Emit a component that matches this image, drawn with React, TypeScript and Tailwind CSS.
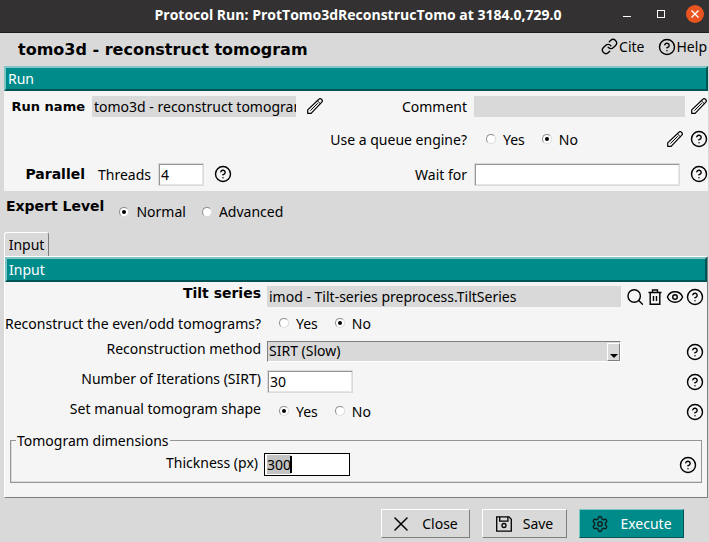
import { useEffect, useRef, type ReactNode } from 'react'
import { CircleHelp, Eye, Link, Settings } from 'lucide-react'

const greyField = 'h-[21px] min-w-0 bg-[#d9d9d9] pl-[2px] outline-none'
const entry =
  'h-[23px] min-w-0 border border-[#dadada] bg-white px-[2px] shadow-[inset_1px_1px_0_#969696,inset_-1px_-1px_0_#e6e6e6] outline-none'

function PencilIcon() {
  return (
    <svg className="size-4" viewBox="0 0 16 16" fill="none" stroke="currentColor" strokeWidth="1.2" strokeLinejoin="round">
      <path d="M.7 15.3v-3.4L11.9 1.2c.7-.7 1.8-.7 2.5 0l.4.4c.7.7.7 1.8 0 2.5L4.1 15.3z" />
      <path d="M10.4 2.8l2.9 2.9M3.4 12.6l7.4-7.4" strokeWidth="1" />
    </svg>
  )
}

function SearchIcon() {
  return (
    <svg className="size-4" viewBox="0 0 16 16" fill="none" stroke="currentColor" strokeWidth="1.4" strokeLinecap="round">
      <circle cx="7.2" cy="7" r="6.2" />
      <path d="M11.7 11.5l3.8 3.8" />
    </svg>
  )
}

function TrashIcon() {
  return (
    <svg className="size-4" viewBox="0 0 16 16" fill="none" stroke="currentColor" strokeWidth="1.4">
      <path d="M1.5 3.5h13M5.5 3.3V1h5v2.3M3.2 3.5v11.7h9.6V3.5M6.5 7v5M9.5 7v5" />
    </svg>
  )
}

function SaveIcon() {
  return (
    <svg className="size-4" viewBox="0 0 16 16" fill="none" stroke="currentColor" strokeWidth="1.3">
      <path d="M.7.8h12.2l2.4 2.4v12H.7z" />
      <path d="M3.7.8v4.4h8.2V.8" />
      <circle cx="8" cy="9.5" r="2" />
    </svg>
  )
}

function CrossIcon() {
  return (
    <svg className="size-4" viewBox="0 0 16 16" fill="none" stroke="currentColor" strokeWidth="1.5" strokeLinecap="round">
      <path d="M2 2l12 12M14 2L2 14" />
    </svg>
  )
}

function IconButton({ label, children }: { label: string; children: ReactNode }) {
  return (
    <button type="button" aria-label={label} className="flex size-4 shrink-0 items-center justify-center">
      {children}
    </button>
  )
}

function Help() {
  return (
    <IconButton label="Help">
      <CircleHelp size={18} strokeWidth={1.9} className="shrink-0" />
    </IconButton>
  )
}

function Radio({ name, label, checked }: { name: string; label: string; checked?: boolean }) {
  return (
    <label className="flex items-center gap-[7px]">
      <input
        type="radio"
        name={name}
        defaultChecked={checked}
        className="flex size-[10px] appearance-none items-center justify-center rounded-full border border-t-[#8c8c8c] border-r-[#dcdcdc] border-b-[#dcdcdc] border-l-[#8c8c8c] bg-white checked:before:size-1 checked:before:rounded-full checked:before:bg-black"
      />
      {label}
    </label>
  )
}

function SectionBar({ children }: { children: ReactNode }) {
  return (
    <h2 className="flex h-[25px] items-center border-2 border-t-[#7fc5c5] border-r-[#005454] border-b-[#005454] border-l-[#7fc5c5] bg-[#008b8b] px-[2px] pb-px text-white">
      {children}
    </h2>
  )
}

function Row({ label, htmlFor, height, bold, raised, children, icons }: {
  label: string
  htmlFor?: string
  height: string
  bold?: boolean
  raised?: boolean
  children: ReactNode
  icons?: ReactNode
}) {
  return (
    <div className={`flex items-center gap-[6px] ${height}`}>
      <label
        htmlFor={htmlFor}
        className={`w-[256px] shrink-0 text-right whitespace-nowrap ${raised ? 'pb-[6px]' : ''} ${bold ? "font-['DejaVu_Sans',sans-serif] font-bold" : ''}`}
      >
        {label}
      </label>
      <div className="flex min-w-0 flex-1">{children}</div>
      <div className="flex w-[80px] shrink-0 justify-end gap-1 pt-[2px] pr-1">{icons}</div>
    </div>
  )
}

export default function App() {
  const thickness = useRef<HTMLInputElement>(null)
  useEffect(() => {
    thickness.current?.focus()
    thickness.current?.select()
  }, [])

  return (
    <div className="min-h-screen bg-[#d9d9d9] font-['Noto_Sans',sans-serif] text-[14px] leading-[19px] text-black">
      <header className="flex h-[33px] items-center border-b border-[#1c1c1c] bg-[#333131] pr-[5px] pb-1 text-white">
        <h1 className="min-w-0 flex-1 pl-[93px] text-center font-['Open_Sans',sans-serif] font-bold whitespace-nowrap">
          Protocol Run: ProtTomo3dReconstrucTomo at 3184.0,729.0
        </h1>
        <div className="flex items-center gap-[21px]">
          <div className="flex items-center gap-[26px]">
            <button type="button" aria-label="Minimize" className="mt-1 h-px w-2 bg-white" />
            <button type="button" aria-label="Maximize" className="size-2 border border-white" />
          </div>
          <button type="button" aria-label="Close window" className="flex size-[18px] items-center justify-center rounded-full bg-[#e95420]">
            <svg className="size-2" viewBox="0 0 8 8" stroke="currentColor" strokeWidth="1.4">
              <path d="M.5.5l7 7M7.5.5l-7 7" />
            </svg>
          </button>
        </div>
      </header>

      <div className="flex h-[33px] items-center justify-between pr-[2px] pl-[18px]">
        <h2 className="font-['DejaVu_Sans',sans-serif] text-[16px] font-bold">tomo3d - reconstruct tomogram</h2>
        <div className="flex gap-[13px] pb-[6px]">
          <a href="#cite" className="flex items-center gap-px">
            <Link size={17} strokeWidth={1.9} />
            Cite
          </a>
          <a href="#help" className="flex items-center gap-px">
            <CircleHelp size={18} strokeWidth={1.9} />
            Help
          </a>
        </div>
      </div>

      <section className="mr-px ml-1 h-[125px] bg-[#f5f5f5]">
        <SectionBar>Run</SectionBar>
        <div className="flex h-[30px] items-center pr-px">
          <label htmlFor="run-name" className="w-[81px] text-right font-['DejaVu_Sans',sans-serif] text-[13px] font-bold">
            Run name
          </label>
          <input id="run-name" defaultValue="tomo3d - reconstruct tomogram" className={`${greyField} mr-[11px] ml-[7px] w-[204px]`} />
          <IconButton label="Edit run name"><PencilIcon /></IconButton>
          <label htmlFor="comment" className="w-[144px] text-right">Comment</label>
          <input id="comment" className={`${greyField} mr-[6px] ml-[7px] flex-1`} />
          <IconButton label="Edit comment"><PencilIcon /></IconButton>
        </div>
        <div className="flex h-9 items-center pr-px">
          <span className="w-[463px] text-right">Use a queue engine?</span>
          <div className="ml-[19px] flex flex-1 gap-[17px]">
            <Radio name="queue" label="Yes" />
            <Radio name="queue" label="No" checked />
          </div>
          <div className="flex gap-2">
            <IconButton label="Edit queue"><PencilIcon /></IconButton>
            <Help />
          </div>
        </div>
        <div className="flex h-[34px] items-center pr-px">
          <span className="w-[81px] text-right font-['DejaVu_Sans',sans-serif] font-bold">Parallel</span>
          <label htmlFor="threads" className="w-[66px] text-right">Threads</label>
          <input id="threads" defaultValue="4" className={`${entry} mr-[11px] ml-[7px] w-[46px]`} />
          <Help />
          <label htmlFor="wait-for" className="w-[236px] text-right">Wait for</label>
          <input id="wait-for" className={`${entry} mr-[11px] ml-[7px] flex-1`} />
          <Help />
        </div>
      </section>

      <div className="flex h-[41px] items-center gap-[15px] pl-[6px]">
        <span className="pb-[10px] font-['DejaVu_Sans',sans-serif] font-bold">Expert Level</span>
        <div className="flex gap-4">
          <Radio name="expert" label="Normal" checked />
          <Radio name="expert" label="Advanced" />
        </div>
      </div>

      <div className="mr-px ml-1">
        <button type="button" role="tab" aria-selected="true" className="flex h-6 w-[45px] items-center justify-center rounded-t-[3px] border-t border-r border-l border-t-white border-r-[#7f7f7f] border-l-white">
          Input
        </button>
        <section className="border border-t-white border-r-[#7f7f7f] border-b-[#7f7f7f] border-l-white bg-[#f5f5f5] pb-[14px]">
          <SectionBar>Input</SectionBar>
          <Row
            label="Tilt series"
            htmlFor="tilt"
            height="h-[28px]"
            bold
            raised
            icons={
              <>
                <IconButton label="Search"><SearchIcon /></IconButton>
                <IconButton label="Delete"><TrashIcon /></IconButton>
                <IconButton label="View"><Eye size={18} strokeWidth={1.9} className="shrink-0" /></IconButton>
                <Help />
              </>
            }
          >
            <input id="tilt" defaultValue="imod - Tilt-series preprocess.TiltSeries" className={`${greyField} flex-1`} />
          </Row>
          <Row label="Reconstruct the even/odd tomograms?" height="h-[26px]">
            <div className="flex gap-[17px] pl-3">
              <Radio name="evenodd" label="Yes" />
              <Radio name="evenodd" label="No" checked />
            </div>
          </Row>
          <Row label="Reconstruction method" htmlFor="method" height="h-[30px]" raised icons={<Help />}>
            <div className="relative flex flex-1">
              <select id="method" className="h-[21px] flex-1 appearance-none border border-t-[#7f7f7f] border-r-white border-b-white border-l-[#7f7f7f] bg-[#d9d9d9] px-px leading-[18px] outline-none">
                <option>SIRT (Slow)</option>
              </select>
              <span className="pointer-events-none absolute top-[2px] right-px flex h-[18px] w-[13px] items-end justify-center border border-t-white border-r-[#7f7f7f] border-b-[#7f7f7f] border-l-white bg-[#d9d9d9] pb-[2px]">
                <svg className="h-1 w-2 shrink-0" viewBox="0 0 8 4">
                  <path d="M0 0h8L4 4z" />
                </svg>
              </span>
            </div>
          </Row>
          <Row label="Number of Iterations (SIRT)" htmlFor="iterations" height="h-[30px]" raised icons={<Help />}>
            <input id="iterations" defaultValue="30" className={`${entry} w-[86px]`} />
          </Row>
          <Row label="Set manual tomogram shape" height="h-[30px]" raised icons={<Help />}>
            <div className="flex gap-[17px] pl-3">
              <Radio name="shape" label="Yes" checked />
              <Radio name="shape" label="No" />
            </div>
          </Row>
          <fieldset className="mx-[5px] mt-[5px] h-[52px] border border-[#969696] shadow-[inset_1px_-1px_0_#dcdcdc]">
            <legend className="ml-[5px] px-px">Tomogram dimensions</legend>
            <div className="flex items-center gap-[6px] pt-[3px] pr-[5px]">
              <label htmlFor="thickness" className="w-[247px] pb-1 text-right">Thickness (px)</label>
              <div className="relative flex flex-1">
                <input
                  id="thickness"
                  ref={thickness}
                  defaultValue="300"
                  className="h-[23px] w-[86px] border border-black bg-white px-[2px] outline-none selection:bg-[#c3c3c3] selection:text-black"
                />
                <span className="absolute top-[3px] left-[26px] h-[17px] w-[2px] bg-black" />
              </div>
              <Help />
            </div>
          </fieldset>
        </section>
      </div>

      <footer className="flex justify-end gap-3 pt-[11px] pr-[25px]">
        <button type="button" className="flex h-[29px] w-[89px] items-center justify-center gap-[13px] border border-t-white border-r-[#7f7f7f] border-b-[#7f7f7f] border-l-white">
          <CrossIcon />
          Close
        </button>
        <button type="button" className="flex h-[29px] w-[85px] items-center justify-center gap-[11px] border border-t-white border-r-[#7f7f7f] border-b-[#7f7f7f] border-l-white">
          <SaveIcon />
          Save
        </button>
        <button type="button" className="flex h-[29px] w-[105px] items-center justify-center gap-[11px] border border-t-[#7fc5c5] border-r-[#005454] border-b-[#005454] border-l-[#7fc5c5] bg-[#008b8b] text-white">
          <Settings size={18} strokeWidth={1.9} className="text-[#102020]" />
          Execute
        </button>
      </footer>
    </div>
  )
}
